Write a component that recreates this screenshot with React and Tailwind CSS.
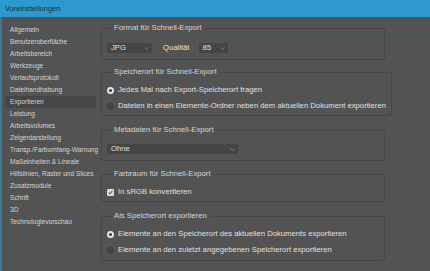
import React from "react";

const navItems = [
  "Allgemein",
  "Benutzeroberfläche",
  "Arbeitsbereich",
  "Werkzeuge",
  "Verlaufsprotokoll",
  "Dateihandhabung",
  "Exportieren",
  "Leistung",
  "Arbeitsvolumes",
  "Zeigerdarstellung",
  "Transp./Farbumfang-Warnung",
  "Maßeinheiten & Lineale",
  "Hilfslinien, Raster und Slices",
  "Zusatzmodule",
  "Schrift",
  "3D",
  "Technologievorschau",
];

function Chevron() {
  return (
    <svg width="5" height="3" viewBox="0 0 5 3" className="shrink-0">
      <polyline points="0.5,0.5 2.5,2.5 4.5,0.5" fill="none" stroke="#8a8a8a" strokeWidth="0.8" />
    </svg>
  );
}

function Select({ value, className }) {
  return (
    <div className={`h-[10px] bg-[#454545] flex items-center justify-between pl-[4px] pr-[3px] ${className}`}>
      <span className="leading-none">{value}</span>
      <Chevron />
    </div>
  );
}

function Radio({ checked, label }) {
  return (
    <div className="h-[16px] flex items-center gap-[4px]">
      {checked ? (
        <span className="w-[7px] h-[7px] rounded-full border-[2px] border-[#e6e6e6] bg-[#3a3a3a] shrink-0" />
      ) : (
        <span className="w-[7px] h-[7px] rounded-full bg-[#424242] shrink-0" />
      )}
      <span className="leading-none">{label}</span>
    </div>
  );
}

function Group({ title, className, children }) {
  return (
    <fieldset className={`border border-[#474747] rounded-[2px] w-[284px] px-[5px] ${className}`}>
      <legend className="ml-[4px] px-[3px] h-[10px] leading-[10px] text-[#d6d6d6]">{title}</legend>
      {children}
    </fieldset>
  );
}

export default function App() {
  return (
    <div className="w-[430px] h-[271px] overflow-hidden bg-[#535353] flex flex-col whitespace-nowrap text-[7.7px] text-[#e0e0e0] font-['Liberation_Sans',Arial,sans-serif]">
      <div className="h-[17px] bg-[#2d99d0] flex items-center pl-[5px] text-[#13304a] text-[7.5px]">
        Voreinstellungen
      </div>
      <div className="flex-1 flex border-l-2 border-[#3e7894] min-h-0">
        <div className="w-[94px] pl-[3px] pt-[7px] shrink-0">
          <ul className="text-[6.6px] text-[#d4d4d4]">
            {navItems.map((item) => (
              <li
                key={item}
                className={`h-[12px] flex items-center pl-[5px] ${item === "Exportieren" ? "bg-[#464646]" : ""}`}
              >
                {item}
              </li>
            ))}
          </ul>
        </div>

        <div className="flex-1 pl-[5px] pt-[6px] flex flex-col">
          <Group title="Format für Schnell-Export" className="pb-[6px]">
            <div className="mt-[10px] flex items-center">
              <Select value="JPG" className="w-[45px]" />
              <span className="ml-[11px] leading-none">Qualität</span>
              <Select value="85" className="w-[29px] ml-[9px]" />
            </div>
          </Group>

          <Group title="Speicherort für Schnell-Export" className="mt-[7px] pb-[1px]">
            <div className="mt-[5px]">
              <Radio checked label="Jedes Mal nach Export-Speicherort fragen" />
              <Radio label="Dateien in einen Elemente-Ordner neben dem aktuellen Dokument exportieren" />
            </div>
          </Group>

          <Group title="Metadaten für Schnell-Export" className="mt-[9px] pb-[6px]">
            <div className="mt-[9px]">
              <Select value="Ohne" className="w-[131px]" />
            </div>
          </Group>

          <Group title="Farbraum für Schnell-Export" className="mt-[8px] pb-[3px]">
            <div className="mt-[7px] h-[12px] flex items-center gap-[4px]">
              <span className="w-[7px] h-[7px] bg-[#dadada] rounded-[1px] flex items-center justify-center shrink-0">
                <svg width="5" height="5" viewBox="0 0 5 5">
                  <polyline points="0.7,2.6 2,3.8 4.3,1" fill="none" stroke="#333" strokeWidth="1" />
                </svg>
              </span>
              <span className="leading-none">In sRGB konvertieren</span>
            </div>
          </Group>

          <Group title="Als Speicherort exportieren" className="mt-[9px] pb-[2px]">
            <div className="mt-[5px]">
              <Radio checked label="Elemente an den Speicherort des aktuellen Dokuments exportieren" />
              <Radio label="Elemente an den zuletzt angegebenen Speicherort exportieren" />
            </div>
          </Group>
        </div>
      </div>
    </div>
  );
}
